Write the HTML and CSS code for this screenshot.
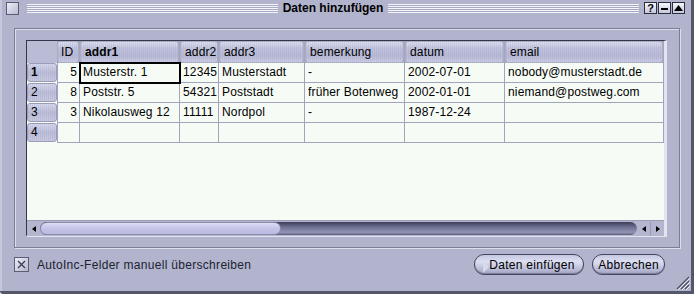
FILE: index.html
```html
<!DOCTYPE html>
<html lang="de">
   <head>
      <meta charset="UTF-8">
      <meta name="viewport" content="width=device-width, initial-scale=1.0">
      <title>Daten hinzufügen</title>
      <link rel="stylesheet" href="styles.css">
   </head>
   <body>
      <div class="window">
         <!-- title bar -->
         <div class="titlebar">
            <span class="close-box"></span>
            <span class="stripes"></span>
            <span class="title">Daten hinzufügen</span>
            <span class="stripes"></span>
            <span class="tb-buttons">
               <span class="tb-btn">?</span>
               <span class="tb-btn">
                  <svg width="11" height="11" viewBox="0 0 11 11"><rect x="2" y="5" width="7" height="2" fill="#000"/></svg>
               </span>
               <span class="tb-btn">
                  <svg width="11" height="11" viewBox="0 0 11 11"><path d="M5.5 2L10 8H1z" fill="#000"/></svg>
               </span>
            </span>
         </div>

         <!-- group frame with the table -->
         <div class="frame">
            <div class="tablebox">
               <div class="viewport">
                  <div class="row head">
                     <div class="corner"></div>
                     <div class="hcell">ID</div>
                     <div class="hcell bold">addr1</div>
                     <div class="hcell">addr2</div>
                     <div class="hcell">addr3</div>
                     <div class="hcell">bemerkung</div>
                     <div class="hcell">datum</div>
                     <div class="hcell">email</div>
                  </div>
                  <div class="row">
                     <div class="rhead bold">1</div>
                     <div class="cell first num">5</div>
                     <div class="cell current">Musterstr. 1</div>
                     <div class="cell">12345</div>
                     <div class="cell">Musterstadt</div>
                     <div class="cell">-</div>
                     <div class="cell">2002-07-01</div>
                     <div class="cell">nobody@musterstadt.de</div>
                  </div>
                  <div class="row">
                     <div class="rhead">2</div>
                     <div class="cell first num">8</div>
                     <div class="cell">Poststr. 5</div>
                     <div class="cell">54321</div>
                     <div class="cell">Poststadt</div>
                     <div class="cell">früher Botenweg</div>
                     <div class="cell">2002-01-01</div>
                     <div class="cell">niemand@postweg.com</div>
                  </div>
                  <div class="row">
                     <div class="rhead">3</div>
                     <div class="cell first num">3</div>
                     <div class="cell">Nikolausweg 12</div>
                     <div class="cell">11111</div>
                     <div class="cell">Nordpol</div>
                     <div class="cell">-</div>
                     <div class="cell">1987-12-24</div>
                     <div class="cell"></div>
                  </div>
                  <div class="row">
                     <div class="rhead">4</div>
                     <div class="cell first num"></div>
                     <div class="cell"></div>
                     <div class="cell"></div>
                     <div class="cell"></div>
                     <div class="cell"></div>
                     <div class="cell"></div>
                     <div class="cell"></div>
                  </div>
               </div>

               <!-- horizontal scrollbar -->
               <div class="hscroll">
                  <span class="arrow">
                     <svg width="8" height="8" viewBox="0 0 8 8"><path d="M2 4L6 1V7z" fill="#000"/></svg>
                  </span>
                  <span class="trough"><span class="thumb"></span></span>
                  <span class="arrows-right">
                     <span class="arrow">
                        <svg width="8" height="8" viewBox="0 0 8 8"><path d="M2 4L6 1V7z" fill="#000"/></svg>
                     </span>
                     <span class="arrow">
                        <svg width="8" height="8" viewBox="0 0 8 8"><path d="M6 4L2 1V7z" fill="#000"/></svg>
                     </span>
                  </span>
               </div>
            </div>
         </div>

         <!-- checkbox and buttons -->
         <div class="bottom">
            <label class="check">
               <span class="box">
                  <svg width="13" height="13" viewBox="0 0 13 13"><path d="M3 3L10 10M10 3L3 10" stroke="#3c3e50" stroke-width="1.3"/></svg>
               </span>
               AutoInc-Felder manuell überschreiben
            </label>
            <span class="spacer"></span>
            <button class="pill default">Daten einfügen</button>
            <button class="pill cancel">Abbrechen</button>
         </div>

         <svg class="grip" width="18" height="18" viewBox="0 0 18 18">
            <path d="M4 16L16 4M8 16L16 8M12 16L16 12" stroke="#4c4e62" stroke-width="1.2"/>
            <path d="M5 17L17 5M9 17L17 9M13 17L17 13" stroke="#eef0f8" stroke-width="1"/>
         </svg>
      </div>
   </body>
</html>
```

FILE: styles.css
```css
body {
    margin: 0;
    background: #fff;
    font-family: "Liberation Sans", Arial, sans-serif;
    font-size: 12px;
    color: #000;
}
.window {
    position: relative;
    box-sizing: border-box;
    width: 694px;
    height: 294px;
    background: #b2b4ce;
    border-right: 3px solid #54566a;
    border-bottom: 3px solid #54566a;
    border-bottom-left-radius: 3px;
    box-shadow: inset 2px 0 #c4c6dc;
}

/* Title bar */
.titlebar {
    display: flex;
    align-items: center;
    height: 19px;
    padding: 0 6px 0 6px;
}
.close-box {
    box-sizing: border-box;
    width: 13px;
    height: 13px;
    margin-top: -3px;
    margin-right: 8px;
    border: 1px solid #5a5c70;
    background: linear-gradient(135deg, #eceef8, #b8bad2);
}
.stripes {
    flex: 1;
    height: 9px;
    margin-top: -2px;
    background: repeating-linear-gradient(#f4f4fa 0 1px, #a8aac4 1px 2px);
}
.title {
    padding: 0 5px;
    font-weight: bold;
    line-height: 17px;
    margin-top: -2px;
}
.tb-buttons {
    display: flex;
    gap: 1px;
    margin-left: 5px;
    margin-top: -3px;
}
.tb-btn {
    box-sizing: border-box;
    display: flex;
    align-items: center;
    justify-content: center;
    width: 13px;
    height: 12px;
    border: 1px solid #2c2e3c;
    background: linear-gradient(#f6f6fc, #c6c8dc);
    font-weight: bold;
    font-size: 11px;
    line-height: 10px;
}

/* Frame around the table */
.frame {
    box-sizing: border-box;
    width: 666px;
    height: 220px;
    margin: 9px 0 0 14px;
    padding: 11px 11px 10px 11px;
    border: 1px solid #7c7e96;
    box-shadow: inset 1px 1px #dcdeec, 1px 1px #dcdeec;
}
.tablebox {
    box-sizing: border-box;
    width: 641px;
    height: 197px;
    border-top: 1px solid #34364a;
    border-left: 1px solid #34364a;
    border-right: 3px solid #e2e4f0;
    border-bottom: 2px solid #e2e4f0;
    background: #b8bad2;
}
.viewport {
    height: 179px;
    background: #f6fbf6;
    overflow: hidden;
    letter-spacing: 0.15px;
}
.row {
    display: grid;
    grid-template-columns: 30px 23px 100px 39px 86px 100px 100px 159px;
    height: 20px;
}
.row.head {
    height: 22px;
    background: #a4a6c0;
}
.corner {
    background: #babcd6;
}
.hcell {
    box-sizing: border-box;
    margin-right: 1px;
    padding-left: 4px;
    line-height: 20px;
    border: 1px solid #aaacc6;
    border-radius: 3px;
    background:
        repeating-linear-gradient(90deg, rgba(120, 122, 160, 0.12) 0 1px, transparent 1px 2px),
        linear-gradient(#dcdef0, #c2c4de 30%, #b8bad6 70%, #cccee6);
}
.head .hcell:nth-child(2) {
    padding-left: 3px;
}
.bold {
    font-weight: bold;
}
.rhead {
    box-sizing: border-box;
    height: 19px;
    padding-left: 3px;
    line-height: 17px;
    border: 1px solid #9a9cb8;
    border-radius: 3px;
    background:
        repeating-linear-gradient(90deg, rgba(120, 122, 160, 0.12) 0 1px, transparent 1px 2px),
        linear-gradient(#d6d8ee, #bcbed8 50%, #c8cae2);
}
.cell {
    box-sizing: border-box;
    padding-left: 3px;
    line-height: 19px;
    white-space: nowrap;
    overflow: hidden;
    border-right: 1px solid #a2a4bc;
    border-bottom: 1px solid #a2a4bc;
}
.cell.first {
    border-left: 1px solid #a2a4bc;
}
.cell.num {
    text-align: right;
    padding: 0 2px 0 0;
}
.cell.current {
    outline: 2px solid #000;
    outline-offset: -1px;
    position: relative;
}

/* Scrollbar */
.hscroll {
    display: flex;
    align-items: center;
    height: 15px;
    background: #b4b6d0;
    border-top: 1px solid #9a9cb6;
}
.arrow {
    display: flex;
    align-items: center;
    justify-content: center;
    width: 13px;
    height: 14px;
}
.trough {
    flex: 1;
    height: 13px;
    border-radius: 7px;
    background: linear-gradient(#3a3c58, #6e7092 40%, #9294b4 80%, #5c5e7a);
    overflow: hidden;
}
.thumb {
    display: block;
    box-sizing: border-box;
    width: 241px;
    height: 13px;
    border-radius: 7px;
    border: 1px solid #8a8cae;
    background: linear-gradient(#dcdcf4, #c4c4e8 50%, #babae0);
}
.arrows-right {
    display: flex;
    width: 27px;
}
.arrows-right .arrow + .arrow {
    border-left: 1px solid #9a9cb6;
}

/* Bottom row */
.bottom {
    display: flex;
    align-items: center;
    height: 21px;
    padding: 6px 26px 0 14px;
    letter-spacing: 0.3px;
}
.check {
    display: flex;
    align-items: center;
    gap: 8px;
    color: #202230;
}
.box {
    box-sizing: border-box;
    display: flex;
    width: 15px;
    height: 15px;
    border: 1px solid #5c5e74;
    background: linear-gradient(135deg, #eceef8, #b4b6cc);
}
.spacer {
    flex: 1;
}
.pill {
    box-sizing: border-box;
    height: 21px;
    margin: 0;
    padding: 0;
    border: 1px solid #44465a;
    border-radius: 10px;
    font-family: inherit;
    font-size: 12px;
    letter-spacing: 0.3px;
    color: #000;
    background: linear-gradient(#c6c8e2, #dcdef2 35%, #b6b8d4 80%, #9a9cba);
    box-shadow: inset 0 -1px #7e809c;
}
.pill.default {
    width: 110px;
    padding-left: 6px;
}
.pill.default::before {
    content: "";
    position: absolute;
    margin: 3px 0 0 -6px;
    border-left: 6px solid #d6d8ec;
    border-top: 6px solid transparent;
    border-bottom: 6px solid transparent;
}
.pill.cancel {
    width: 73px;
    margin-left: 8px;
}
.grip {
    position: absolute;
    right: 0;
    bottom: 0;
}
```
